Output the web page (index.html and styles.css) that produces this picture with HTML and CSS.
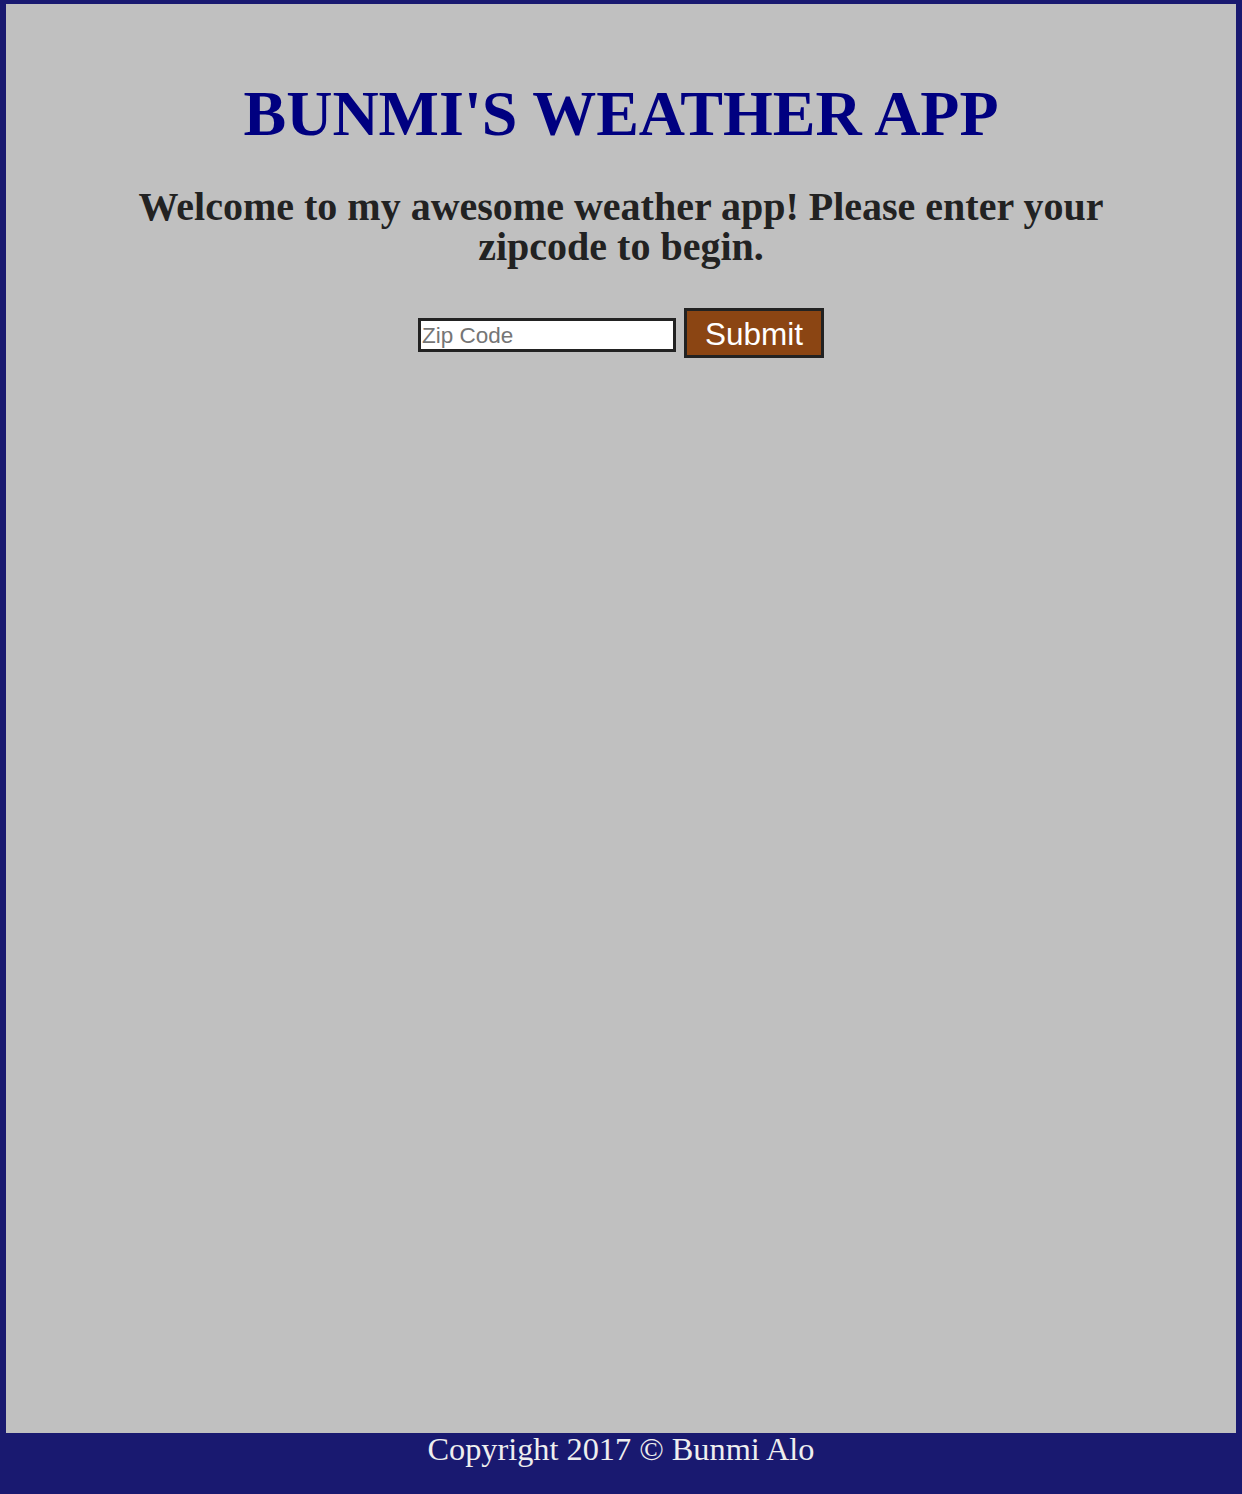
FILE: index.html
```html
<!DOCTYPE html>
<html>
<head>
<meta charset="utf-8">
<title>Bunmi's Weather App</title>
<link rel="stylesheet" href="styles.css">
</head>
<body>
<main class="app">
  <h1 class="title">BUNMI'S WEATHER APP</h1>
  <h2 class="intro">Welcome to my awesome weather app! Please enter your zipcode to begin.</h2>
  <form class="zip-form">
    <input class="zip-input" type="text" placeholder="Zip Code">
    <button class="submit-btn" type="button">Submit</button>
  </form>
</main>
<footer class="footer">Copyright 2017 © Bunmi Alo</footer>
</body>
</html>
```
FILE: styles.css
```css
html, body {
  margin: 0;
  padding: 0;
}
body {
  background: #191970;
  font-family: "Liberation Serif", "Times New Roman", serif;
  height: 1494px;
  overflow: hidden;
}
.app {
  margin: 4px 6px 0;
  height: 1429px;
  background: #c0c0c0;
  display: flex;
  flex-direction: column;
  align-items: center;
  box-sizing: border-box;
  padding-top: 78px;
}
.title {
  margin: 0;
  font-size: 64px;
  line-height: 1;
  font-weight: bold;
  color: #000080;
  text-align: center;
}
.intro {
  margin: 41px 0 0;
  width: 1000px;
  font-size: 40px;
  line-height: 40px;
  font-weight: bold;
  color: #222;
  text-align: center;
}
.zip-form {
  margin-top: 41px;
  display: flex;
  align-items: flex-start;
  gap: 8px;
}
.zip-input {
  margin-top: 10px;
  width: 258px;
  height: 34px;
  box-sizing: border-box;
  border: 3px solid #222;
  background: #fff;
  padding: 2px 1px 0;
  font-family: "Liberation Sans", Arial, sans-serif;
  font-size: 22.5px;
  outline: none;
}
.zip-input::placeholder {
  color: #757575;
}
.submit-btn {
  width: 140px;
  height: 50px;
  box-sizing: border-box;
  border: 3px solid #222;
  background: #8b4513;
  color: #fff;
  font-family: "Liberation Sans", Arial, sans-serif;
  font-size: 31.5px;
  padding: 2px 0 0;
}
.footer {
  height: 61px;
  color: #eee;
  text-align: center;
  font-size: 32.3px;
  line-height: 32px;
}
```
